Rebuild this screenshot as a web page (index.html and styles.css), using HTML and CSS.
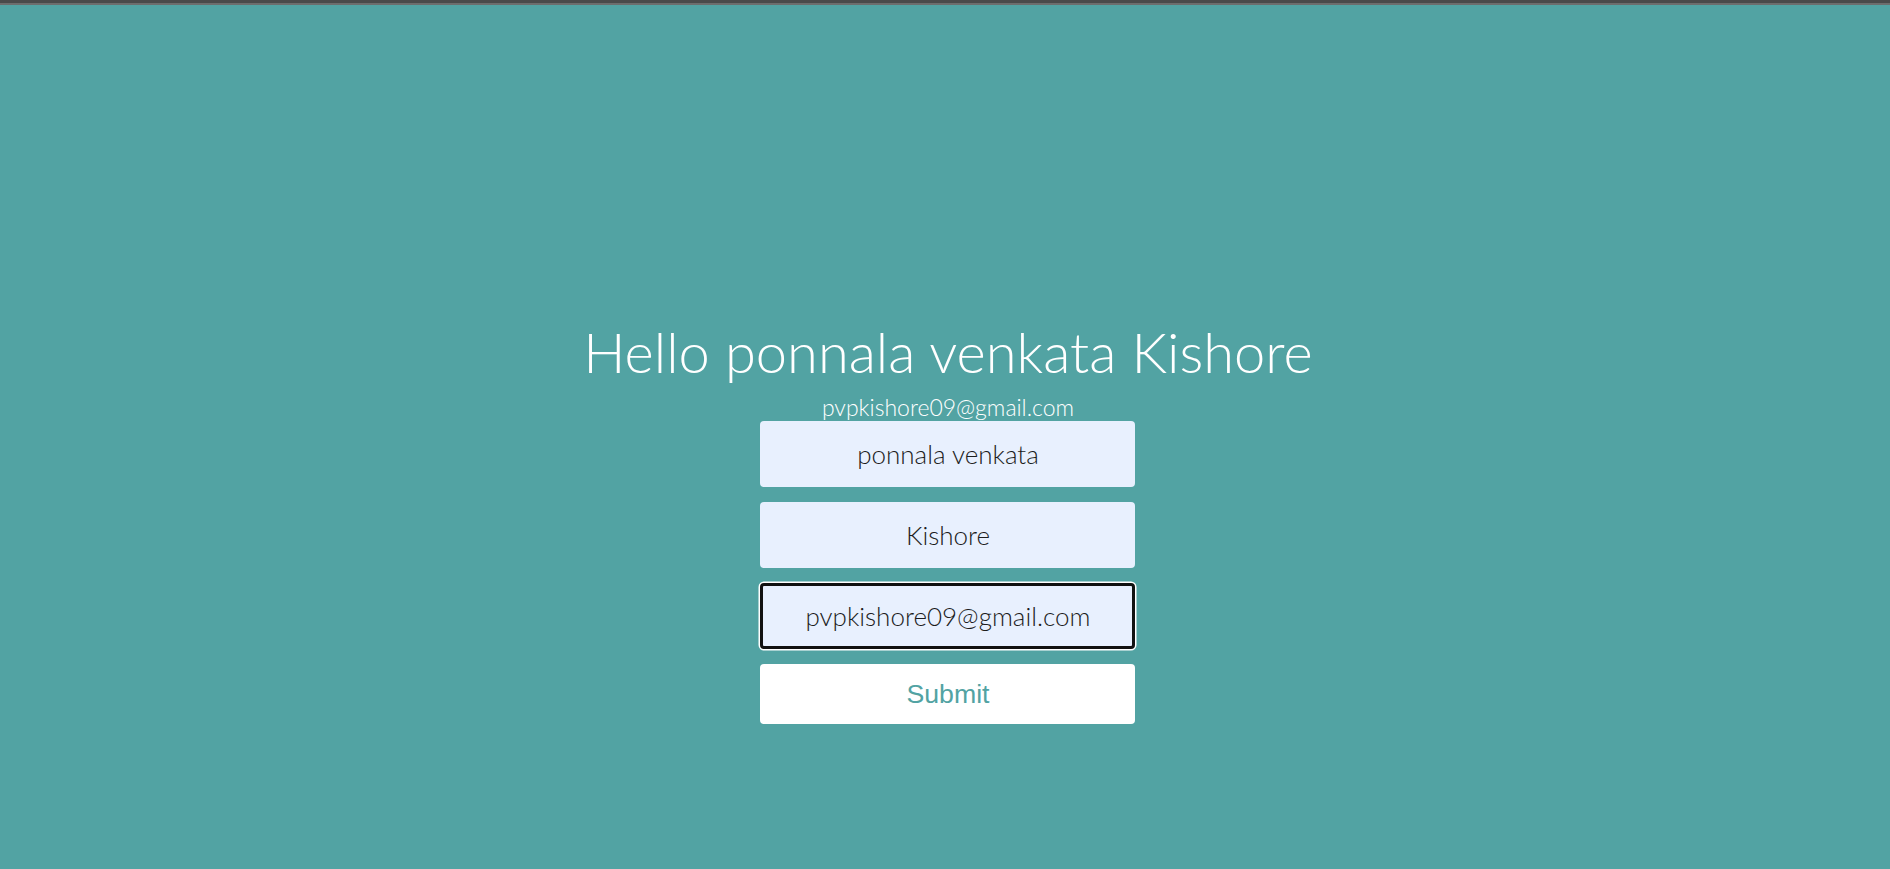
FILE: index.html
```html
<!DOCTYPE html>
<html lang="en">
<head>
<meta charset="utf-8">
<title>Hello</title>
<link rel="stylesheet" href="styles.css">
</head>
<body>
<div class="topbar"></div>
<main class="page">
  <div class="card">
    <h1 class="title">Hello ponnala venkata Kishore</h1>
    <p class="subtitle">pvpkishore09@gmail.com</p>
    <form class="form">
      <input class="field" type="text" value="ponnala venkata">
      <input class="field" type="text" value="Kishore">
      <input class="field field-focus" type="email" value="pvpkishore09@gmail.com">
      <button class="submit" type="button">Submit</button>
    </form>
  </div>
</main>
</body>
</html>
```

FILE: styles.css
```css
html, body {
  margin: 0;
  padding: 0;
}
body {
  background: #52a3a3;
  height: 869px;
  overflow: hidden;
  font-family: "Lato", "Liberation Sans", sans-serif;
  display: flex;
  flex-direction: column;
}
.topbar {
  height: 3px;
  background: #4a4a4a;
  border-bottom: 2px solid #6d6d6d;
}
.page {
  flex: 1;
  display: flex;
  justify-content: center;
  padding-left: 6px;
}
.card {
  display: flex;
  flex-direction: column;
  align-items: center;
  padding-top: 313px;
}
.title {
  margin: 0 0 8px;
  font-weight: 300;
  font-size: 56px;
  line-height: 67px;
  color: #fff;
  white-space: nowrap;
}
.subtitle {
  margin: 0;
  font-weight: 300;
  font-size: 23px;
  line-height: 28px;
  color: #fff;
}
.form {
  display: flex;
  flex-direction: column;
  gap: 15px;
  margin-top: 0;
}
.field {
  box-sizing: border-box;
  width: 375px;
  height: 66px;
  border: none;
  border-radius: 4px;
  background: #e8f0fe;
  color: #1c1c1c;
  font-family: "Lato", sans-serif;
  font-weight: 300;
  font-size: 26px;
  text-align: center;
  padding: 0;
  outline: none;
}
.field-focus {
  border: 3px solid #111;
  box-shadow: 0 0 0 1.5px #fff;
}
.submit {
  width: 375px;
  height: 60px;
  border: none;
  border-radius: 4px;
  background: #fff;
  color: #52a3a3;
  font-family: "Liberation Sans", Arial, sans-serif;
  font-size: 26.7px;
  padding: 0;
}
```
